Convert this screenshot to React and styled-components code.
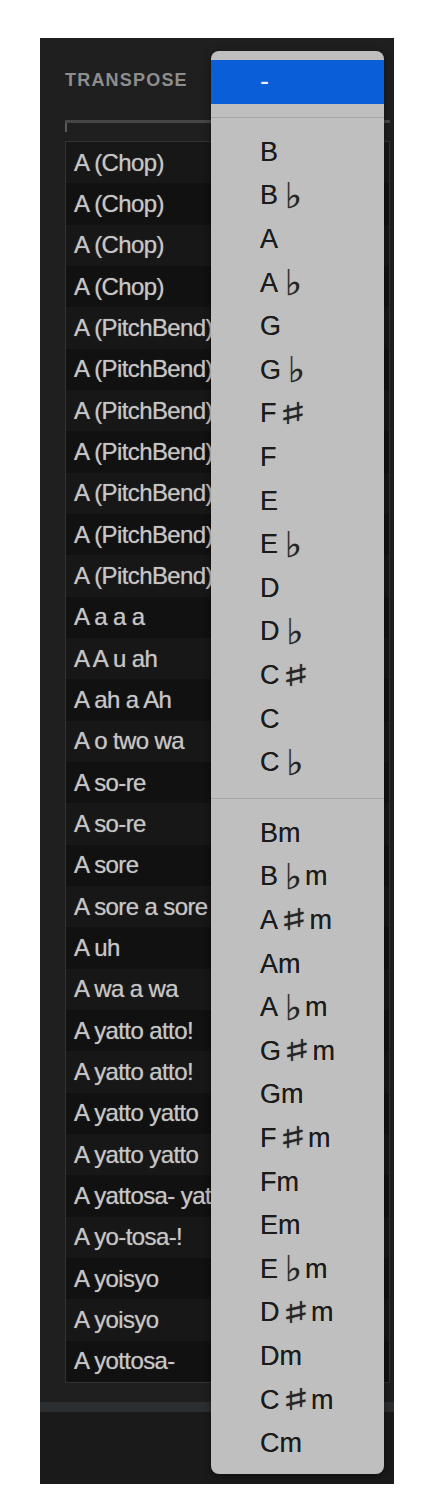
import styled, { createGlobalStyle } from 'styled-components'

const GlobalStyle = createGlobalStyle`
	body{
		margin:0;
		background:#ffffff;
		font-family:"Liberation Sans", Arial, sans-serif;
	}
`;

const Panel = styled.div`
	position:relative;
	margin:38px 0 0 40px;
	width:354px;
	height:1446px;
	background:#1f1f1f;
	display:flex;
	flex-direction:column;
`;

const Header = styled.div`
	height:82px;
	padding:0 25px;
	display:flex;
	align-items:center;
	padding-top:2px;
	box-sizing:border-box;
`;

const Label = styled.span`
	font-family:"Liberation Sans", Arial, sans-serif;
	font-weight:700;
	font-size:18px;
	letter-spacing:1.2px;
	color:#8e8e8e;
`;

const Track = styled.div`
	position:relative;
	height:3px;
	margin:0 4px 0 25px;
	background:#474747;
	&::after{
		content:'';
		position:absolute;
		left:0;
		top:3px;
		width:2px;
		height:9px;
		background:#5a5a5a;
	}
`;

const List = styled.div`
	margin:18px 4px 0 25px;
	border:1px solid #333;
	background:#121212;
	display:flex;
	flex-direction:column;
`;

const Row = styled.div`
	height:41.33px;
	display:flex;
	align-items:center;
	padding-left:8px;
	background:${props => props.odd ? '#111111' : '#171717'};
	font-size:24px;
	letter-spacing:-0.6px;
	color:#c6c6c6;
	text-shadow:0 0 1px rgba(200,200,200,0.6);
	white-space:nowrap;
	overflow:hidden;
`;

const Gap = styled.div`
	height:19px;
`;

const Band = styled.div`
	height:10px;
	background:#2c2f31;
`;

const Bottom = styled.div`
	flex:1;
	background:#1a1a1a;
`;

const Menu = styled.div`
	position:absolute;
	left:171px;
	top:13px;
	width:173px;
	padding:9px 0;
	border-radius:8px;
	background:#bfbfbf;
	box-shadow:0 2px 8px rgba(0,0,0,0.45);
	display:flex;
	flex-direction:column;
`;

const Item = styled.div`
	height:43.6px;
	display:flex;
	align-items:center;
	padding-left:49px;
	font-size:27px;
	color:${props => props.selected ? '#e8f0ff' : '#1b1b1b'};
	background:${props => props.selected ? '#0a5ed8' : 'transparent'};
	text-shadow:${props => props.selected ? 'none' : '0 0 0.6px rgba(0,0,0,0.6)'};
`;

const Accidental = styled.span`
	display:inline-block;
	font-family:"DejaVu Sans", sans-serif;
	font-size:${props => props.sharp ? '30px' : '36px'};
	line-height:1;
	color:#252525;
	text-shadow:0 0 0.8px rgba(0,0,0,0.7);
	margin:${props => props.sharp ? '0 8px 0 9px' : '0 3px 0 7px'};
	transform:${props => props.sharp ? 'scaleX(2)' : 'none'};
`;

const Separator = styled.div`
	height:27px;
	display:flex;
	align-items:center;
	&::before{
		content:'';
		flex:1;
		height:1px;
		background:#a6a6a6;
	}
`;

const phrases = [
	'A (Chop)', 'A (Chop)', 'A (Chop)', 'A (Chop)',
	'A (PitchBend)', 'A (PitchBend)', 'A (PitchBend)', 'A (PitchBend)',
	'A (PitchBend)', 'A (PitchBend)', 'A (PitchBend)',
	'A a a a', 'A A u ah', 'A ah a Ah', 'A o two wa', 'A so-re', 'A so-re',
	'A sore', 'A sore a sore', 'A uh', 'A wa a wa', 'A yatto atto!',
	'A yatto atto!', 'A yatto yatto', 'A yatto yatto', 'A yattosa- yattosa',
	'A yo-tosa-!', 'A yoisyo', 'A yoisyo', 'A yottosa-',
]

const majors = [
	['B'], ['B', '♭'], ['A'], ['A', '♭'], ['G'], ['G', '♭'], ['F', '♯'], ['F'],
	['E'], ['E', '♭'], ['D'], ['D', '♭'], ['C', '♯'], ['C'], ['C', '♭'],
]

const minors = [
	['B'], ['B', '♭'], ['A', '♯'], ['A'], ['A', '♭'], ['G', '♯'], ['G'], ['F', '♯'],
	['F'], ['E'], ['E', '♭'], ['D', '♯'], ['D'], ['C', '♯'], ['C'],
]

function Key({root, acc, suffix}){
	return(
		<Item>
			{root}
			{acc && <Accidental sharp={acc === '♯'}>{acc}</Accidental>}
			{suffix}
		</Item>
	)
}

function App(){
	return(
		<>
			<GlobalStyle />
			<Panel>
				<Header>
					<Label>TRANSPOSE</Label>
				</Header>
				<Track />
				<List>
					{phrases.map((p, index)=>(
						<Row key={index} odd={index % 2 === 1}>{p}</Row>
					))}
				</List>
				<Gap />
				<Band />
				<Bottom />

				<Menu>
					<Item selected>-</Item>
					<Separator />
					{majors.map(([root, acc], index)=>(
						<Key key={index} root={root} acc={acc} />
					))}
					<Separator />
					{minors.map(([root, acc], index)=>(
						<Key key={index} root={root} acc={acc} suffix="m" />
					))}
				</Menu>
			</Panel>
		</>
	)
}

export default App
